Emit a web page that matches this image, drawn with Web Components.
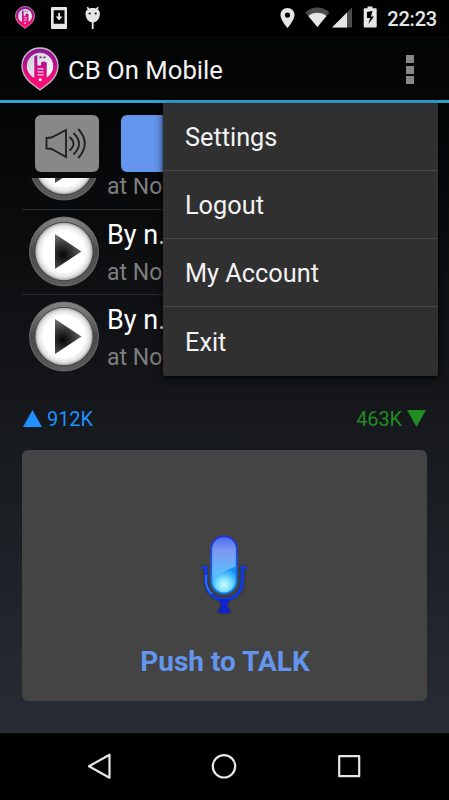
<!DOCTYPE html>
<html lang="en">
<head>
<meta charset="utf-8">
<title>CB On Mobile</title>
<style>
  body {
    margin: 0;
    background: #000;
    font-family: Roboto, "Liberation Sans", sans-serif;
    color: #f3f3f3;
  }
</style>
</head>
<body>
<cb-phone></cb-phone>

<script>
/**
 * Attaches an open shadow root with the given markup.
 */
const render = (element, html) => {
  const template = document.createElement('template')
  template.innerHTML = html
  element.attachShadow({ mode: 'open' }).appendChild(template.content.cloneNode(true))
}

/**
 * The map pin logo with a walkie-talkie.
 */
customElements.define('cb-logo',
  class extends HTMLElement {
    constructor () {
      super()
      render(this, `
<style>
  :host { display: block; flex: none; }
  svg { display: block; width: 100%; height: 100%; }
</style>
<svg viewBox="0 0 38 44" preserveAspectRatio="none">
  <defs>
    <linearGradient id="pin" gradientUnits="userSpaceOnUse" x1="0" y1="0" x2="0" y2="44">
      <stop offset="0" stop-color="#8c1a9c"/>
      <stop offset=".35" stop-color="#b01090"/>
      <stop offset=".65" stop-color="#ee0a7c"/>
      <stop offset="1" stop-color="#ff0f70"/>
    </linearGradient>
    <linearGradient id="disc" x1="0" y1="0" x2="1" y2="1">
      <stop offset="0" stop-color="#c9c9d2"/>
      <stop offset="1" stop-color="#fff"/>
    </linearGradient>
  </defs>
  <path d="M19 1C9 1 1 9 1 19c0 6.500 3.500 12 8 16.200L19 43l10-7.800C33.500 31 37 25.500 37 19 37 9 29 1 19 1z" fill="url(#pin)" stroke="#c8bcc4" stroke-width="1.300"/>
  <circle cx="19" cy="19" r="13.200" fill="url(#disc)"/>
  <path d="M13.300 9.500l3-1.500v10.500h3.700v-2c0-1.200 1-2 2.800-2s2.900 .8 2.900 2V34L19 39l-5.700-5z" fill="url(#pin)"/>
  <path d="M16.500 21.800h6M16.500 24.800h6M16.500 27.800h6" stroke="#f3d8e6" stroke-width="1.300"/>
  <circle cx="19.200" cy="32.700" r="1.500" fill="#fff"/>
  <path d="M18.500 10.300h2M22.500 10.300h2" stroke="#6f2a58" stroke-width="1.700"/>
</svg>`)
    }
  }
)

/**
 * The Android status bar.
 */
customElements.define('status-bar',
  class extends HTMLElement {
    constructor () {
      super()
      render(this, `
<style>
  :host {
    box-sizing: border-box;
    display: flex;
    justify-content: space-between;
    height: 36px;
    padding: 6px 12px 0 15px;
    background: #000;
  }
  div { display: flex; }
  svg { display: block; fill: #e6e6e6; }
  cb-logo { width: 20px; height: 23px; }
  time { margin-left: 10px; font-size: 20px; line-height: 26px; font-weight: 500; color: #e6e6e6; letter-spacing: -.2px; }
</style>
<div>
  <cb-logo></cb-logo>
  <svg width="75" height="26" viewBox="35 6 75 26">
    <path fill-rule="evenodd" d="M52 7h14a1 1 0 0 1 1 1v20a1 1 0 0 1-1 1H52a1 1 0 0 1-1-1V8a1 1 0 0 1 1-1zm1.700 3.200v13.500h10.800V10.200z"/>
    <path d="M58.200 13h1.800v3.600h2.500L59.100 20.500l-3.400-3.900h2.500z"/>
    <path d="M85.500 13.500c0-3.500 3-5.600 7.200-5.600s7.200 2.100 7.200 5.600c0 5-3.200 9-7.200 9s-7.200-4-7.200-9z"/>
    <path d="M88.800 9.200l-1.600-2M96.600 9.200l1.600-2M92.700 22v7" stroke="#e6e6e6" stroke-width="1.800"/>
    <circle cx="89.700" cy="13.500" r="1.100" fill="#111"/>
    <circle cx="95.700" cy="13.500" r="1.100" fill="#111"/>
  </svg>
</div>
<div>
  <svg width="98" height="26" viewBox="279 6 98 26">
    <path fill-rule="evenodd" d="M287.500 8c-4 0-7 3-7 7 0 5 7 13 7 13s7-8 7-13c0-4-3-7-7-7zm0 4.500a2.600 2.600 0 1 1 0 5.200 2.600 2.600 0 0 1 0-5.200z"/>
    <path d="M305.300 12.500c7-6.600 17-6.600 24.100 0L317.400 27z" fill="#4c4c4c"/>
    <path d="M308.300 16c5-4.300 13-4.300 18.200 0L317.400 27z"/>
    <path d="M352 7.500V27.500H332z" fill="#4c4c4c"/>
    <path d="M347 12.500V27.500H332z"/>
    <path fill-rule="evenodd" d="M367.500 6.500h5v1.800h3.200a1 1 0 0 1 1 1V26.500a1 1 0 0 1-1 1h-11a1 1 0 0 1-1-1V9.300a1 1 0 0 1 1-1h2.800zM372.500 11l-5.500 1v6h3.200l-1.800 6 5.600-7.500h-3z"/>
  </svg>
  <time>22:23</time>
</div>`)
    }
  }
)

/**
 * The action bar with logo, title and overflow button.
 */
customElements.define('action-bar',
  class extends HTMLElement {
    constructor () {
      super()
      render(this, `
<style>
  :host {
    box-sizing: border-box;
    display: flex;
    height: 67px;
    padding: 11px 35.500px 0 21px;
    border-bottom: 3px solid #2ea3cf;
    background: linear-gradient(#090909, #020303 4%, #050707);
  }
  cb-logo { width: 38px; height: 44px; }
  h1 { flex: 1; margin: 0 0 0 9px; font-size: 25.700px; line-height: 46px; font-weight: 400; }
  .dots { display: grid; gap: 2.500px; align-content: start; padding-top: 8px; }
  .dots i { width: 8px; height: 8px; background: #888; }
</style>
<cb-logo></cb-logo>
<h1><slot></slot></h1>
<div class="dots"><i></i><i></i><i></i></div>`)
    }
  }
)

/**
 * One recorded message with its play button.
 */
customElements.define('message-row',
  class extends HTMLElement {
    constructor () {
      super()
      render(this, `
<style>
  :host {
    box-sizing: border-box;
    display: flex;
    flex: none;
    height: 85.500px;
    padding: 6px 0 0 6px;
    border-bottom: 1px solid #2b2c2e;
    white-space: nowrap;
  }
  :host(:last-child) { border-color: transparent; }
  svg { flex: none; width: 72px; height: 72px; margin-right: 7px; }
  .name { height: 39px; font-size: 27px; line-height: 39px; color: #fff; }
  .date { font-size: 23px; line-height: 35px; color: #7e7e7e; }
</style>
<svg viewBox="0 0 72 72">
  <defs>
    <linearGradient id="ring" x1="0" y1="0" x2="0" y2="1">
      <stop offset="0" stop-color="#858585"/>
      <stop offset=".5" stop-color="#4a4a4a"/>
      <stop offset="1" stop-color="#5c5c5c"/>
    </linearGradient>
    <radialGradient id="face">
      <stop offset=".72" stop-color="#fff"/>
      <stop offset=".9" stop-color="#e2e2e2"/>
      <stop offset="1" stop-color="#a5a5a5"/>
    </radialGradient>
    <radialGradient id="play" gradientUnits="userSpaceOnUse" cx="35" cy="39" r="22">
      <stop offset="0" stop-color="#050505"/>
      <stop offset=".5" stop-color="#3a3a3a"/>
      <stop offset="1" stop-color="#777"/>
    </radialGradient>
  </defs>
  <circle cx="36" cy="35.500" r="34.500" fill="url(#ring)" stroke="#777" stroke-width=".8"/>
  <circle cx="36" cy="35.500" r="29.500" fill="#3f3f3f"/>
  <circle cx="36" cy="35.500" r="28.700" fill="url(#face)"/>
  <path d="M27 18L53.500 35.500 27 53z" fill="url(#play)"/>
</svg>
<div>
  <div class="name"><slot name="name"></slot></div>
  <div class="date"><slot></slot></div>
</div>`)
    }
  }
)

/**
 * Sent and received traffic.
 */
customElements.define('traffic-stats',
  class extends HTMLElement {
    constructor () {
      super()
      render(this, `
<style>
  :host { display: flex; justify-content: space-between; font-size: 20px; line-height: 24px; letter-spacing: -.1px; }
  span { display: flex; align-items: center; gap: 5px; }
  .up { color: #1e90ff; }
  .down { color: #228b22; }
  svg { fill: currentColor; }
</style>
<span class="up"><svg width="19" height="17"><path d="M9.500 0L19 17H0z"/></svg><slot name="up"></slot></span>
<span class="down"><slot name="down"></slot><svg width="19" height="17"><path d="M0 0h19L9.500 17z"/></svg></span>`)
    }
  }
)

/**
 * The big push to talk button.
 */
customElements.define('talk-button',
  class extends HTMLElement {
    constructor () {
      super()
      render(this, `
<style>
  :host {
    box-sizing: border-box;
    display: flex;
    flex-direction: column;
    align-items: center;
    height: 251px;
    padding: 80px 0 0 1px;
    border-radius: 6px;
    background: #444;
    font-size: 28px;
    line-height: 36px;
    font-weight: 700;
    color: #6495ed;
  }
  svg { width: 60px; height: 90px; margin: 0 3px 24.500px 0; }
</style>
<svg viewBox="193 530 60 90">
  <defs>
    <linearGradient id="body" x1="0" y1="0" x2="0" y2="1">
      <stop offset="0" stop-color="#4a68f0"/>
      <stop offset=".25" stop-color="#7c98f0"/>
      <stop offset=".65" stop-color="#5fbcff"/>
      <stop offset="1" stop-color="#35a0ff"/>
    </linearGradient>
    <radialGradient id="glow" gradientUnits="userSpaceOnUse" cx="223" cy="585" r="17">
      <stop offset="0" stop-color="#d5fbff"/>
      <stop offset=".35" stop-color="#84e6ff"/>
      <stop offset="1" stop-color="#1590fb"/>
    </radialGradient>
    <linearGradient id="edge" x1="0" y1="0" x2="0" y2="1">
      <stop offset="0" stop-color="#2432e0"/>
      <stop offset="1" stop-color="#087fff"/>
    </linearGradient>
    <filter id="shade" x="-30%" y="-30%" width="160%" height="160%">
      <feDropShadow dx="0" dy="0" stdDeviation="1.200" flood-color="#222" flood-opacity=".8"/>
    </filter>
    <clipPath id="capsule"><rect x="210" y="536" width="26" height="57.500" rx="13"/></clipPath>
  </defs>
  <g filter="url(#shade)">
    <path d="M200.500 567.500h4.500v13c0 11 7.500 19 18.200 19s18.200-8 18.200-19v-13h4.500" fill="none" stroke="#0c3bdc" stroke-width="3.200"/>
    <path d="M205 575v5c0 6 2.200 10.500 6 14" fill="none" stroke="#2b78ff" stroke-width="1.600"/>
    <path d="M217 599h12.500l-3 4.500v5l2.500 1v3.500h-11.500v-3.500l2.300-1v-5z" fill="#0c20d0"/>
  </g>
  <g clip-path="url(#capsule)">
    <rect x="210" y="536" width="26" height="58" fill="url(#body)"/>
    <path d="M209 585c4-8 14-15 28-19v29h-28z" fill="url(#glow)"/>
  </g>
  <rect x="210.300" y="536.300" width="25.400" height="57" rx="12.700" fill="none" stroke="url(#edge)" stroke-width="1.800"/>
</svg>
<slot></slot>`)
    }
  }
)

/**
 * The overflow menu.
 */
customElements.define('overflow-menu',
  class extends HTMLElement {
    constructor () {
      super()
      render(this, `
<style>
  :host {
    display: grid;
    grid-auto-rows: 1fr;
    width: 275px;
    height: 272.500px;
    border-radius: 0 0 2px 2px;
    background: #303030;
    box-shadow: 0 4px 8px rgba(0, 0, 0, .65), 0 1px 2px rgba(0, 0, 0, .6);
  }
  ::slotted(*) {
    display: flex;
    align-items: center;
    padding: 2px 0 0 22px;
    border-bottom: 1px solid #474747;
    font-size: 25.300px;
  }
  ::slotted(:last-child) { border-bottom: 0; }
</style>
<slot></slot>`)
    }
  }
)

/**
 * The Android navigation bar.
 */
customElements.define('nav-bar',
  class extends HTMLElement {
    constructor () {
      super()
      render(this, `
<style>
  :host { box-sizing: border-box; display: flex; justify-content: center; gap: 97px; height: 67px; padding: 19px 1px 0 0; background: #000; }
  svg { width: 28px; height: 28px; fill: none; stroke: #e6e6e6; stroke-width: 2.200; stroke-linejoin: round; }
</style>
<svg><path d="M4 14.300L24.500 2.700v23z"/></svg>
<svg><circle cx="14" cy="14.300" r="11.200"/></svg>
<svg><rect x="4.200" y="4.200" width="20" height="20"/></svg>`)
    }
  }
)

/**
 * The whole screen.
 */
customElements.define('cb-phone',
  class extends HTMLElement {
    constructor () {
      super()
      render(this, `
<style>
  :host { position: relative; display: flex; flex-direction: column; height: 800px; overflow: hidden; }
  main {
    box-sizing: border-box;
    display: flex;
    flex-direction: column;
    height: 630px;
    padding: 12px 22px 0;
    background: linear-gradient(#030404, #282c34);
  }
  .tools { display: flex; gap: 21.500px; margin: 0 13px; }
  .tools div { box-sizing: border-box; height: 57px; border-radius: 6px; }
  .speaker { width: 64px; padding: 11px 0 0 9px; background: #888; }
  .speaker svg { display: block; fill: none; stroke: #222; stroke-width: 1.900; }
  .channel { flex: 1; background: #6495ed; }
  .list { display: flex; flex-direction: column; height: 209px; margin-top: 6px; overflow: hidden; }
  .list message-row:first-child { margin-top: -54px; }
  traffic-stats { margin: 19.500px 1px 19px; }
  overflow-menu { position: absolute; top: 103px; left: 163px; }
</style>
<status-bar></status-bar>
<action-bar>CB On Mobile</action-bar>
<main>
  <div class="tools">
    <div class="speaker">
      <svg width="46" height="34" viewBox="44 126 46 34">
        <path d="M46.500 138l5-.5 14.500-7.500v27l-14.500-8-5-.5z"/>
        <path d="M69.500 137q8 6.500 0 13.500M73.500 133q11 10.500 0 21.500M78.300 129q13 14.500 0 29"/>
      </svg>
    </div>
    <div class="channel"></div>
  </div>
  <div class="list">
    <message-row>at Nov</message-row>
    <message-row><span slot="name">By n...</span>at Nov</message-row>
    <message-row><span slot="name">By n...</span>at Nov</message-row>
  </div>
  <traffic-stats><span slot="up">912K</span><span slot="down">463K</span></traffic-stats>
  <talk-button>Push to TALK</talk-button>
</main>
<nav-bar></nav-bar>
<overflow-menu>
  <div>Settings</div>
  <div>Logout</div>
  <div>My Account</div>
  <div>Exit</div>
</overflow-menu>`)
    }
  }
)
</script>
</body>
</html>
